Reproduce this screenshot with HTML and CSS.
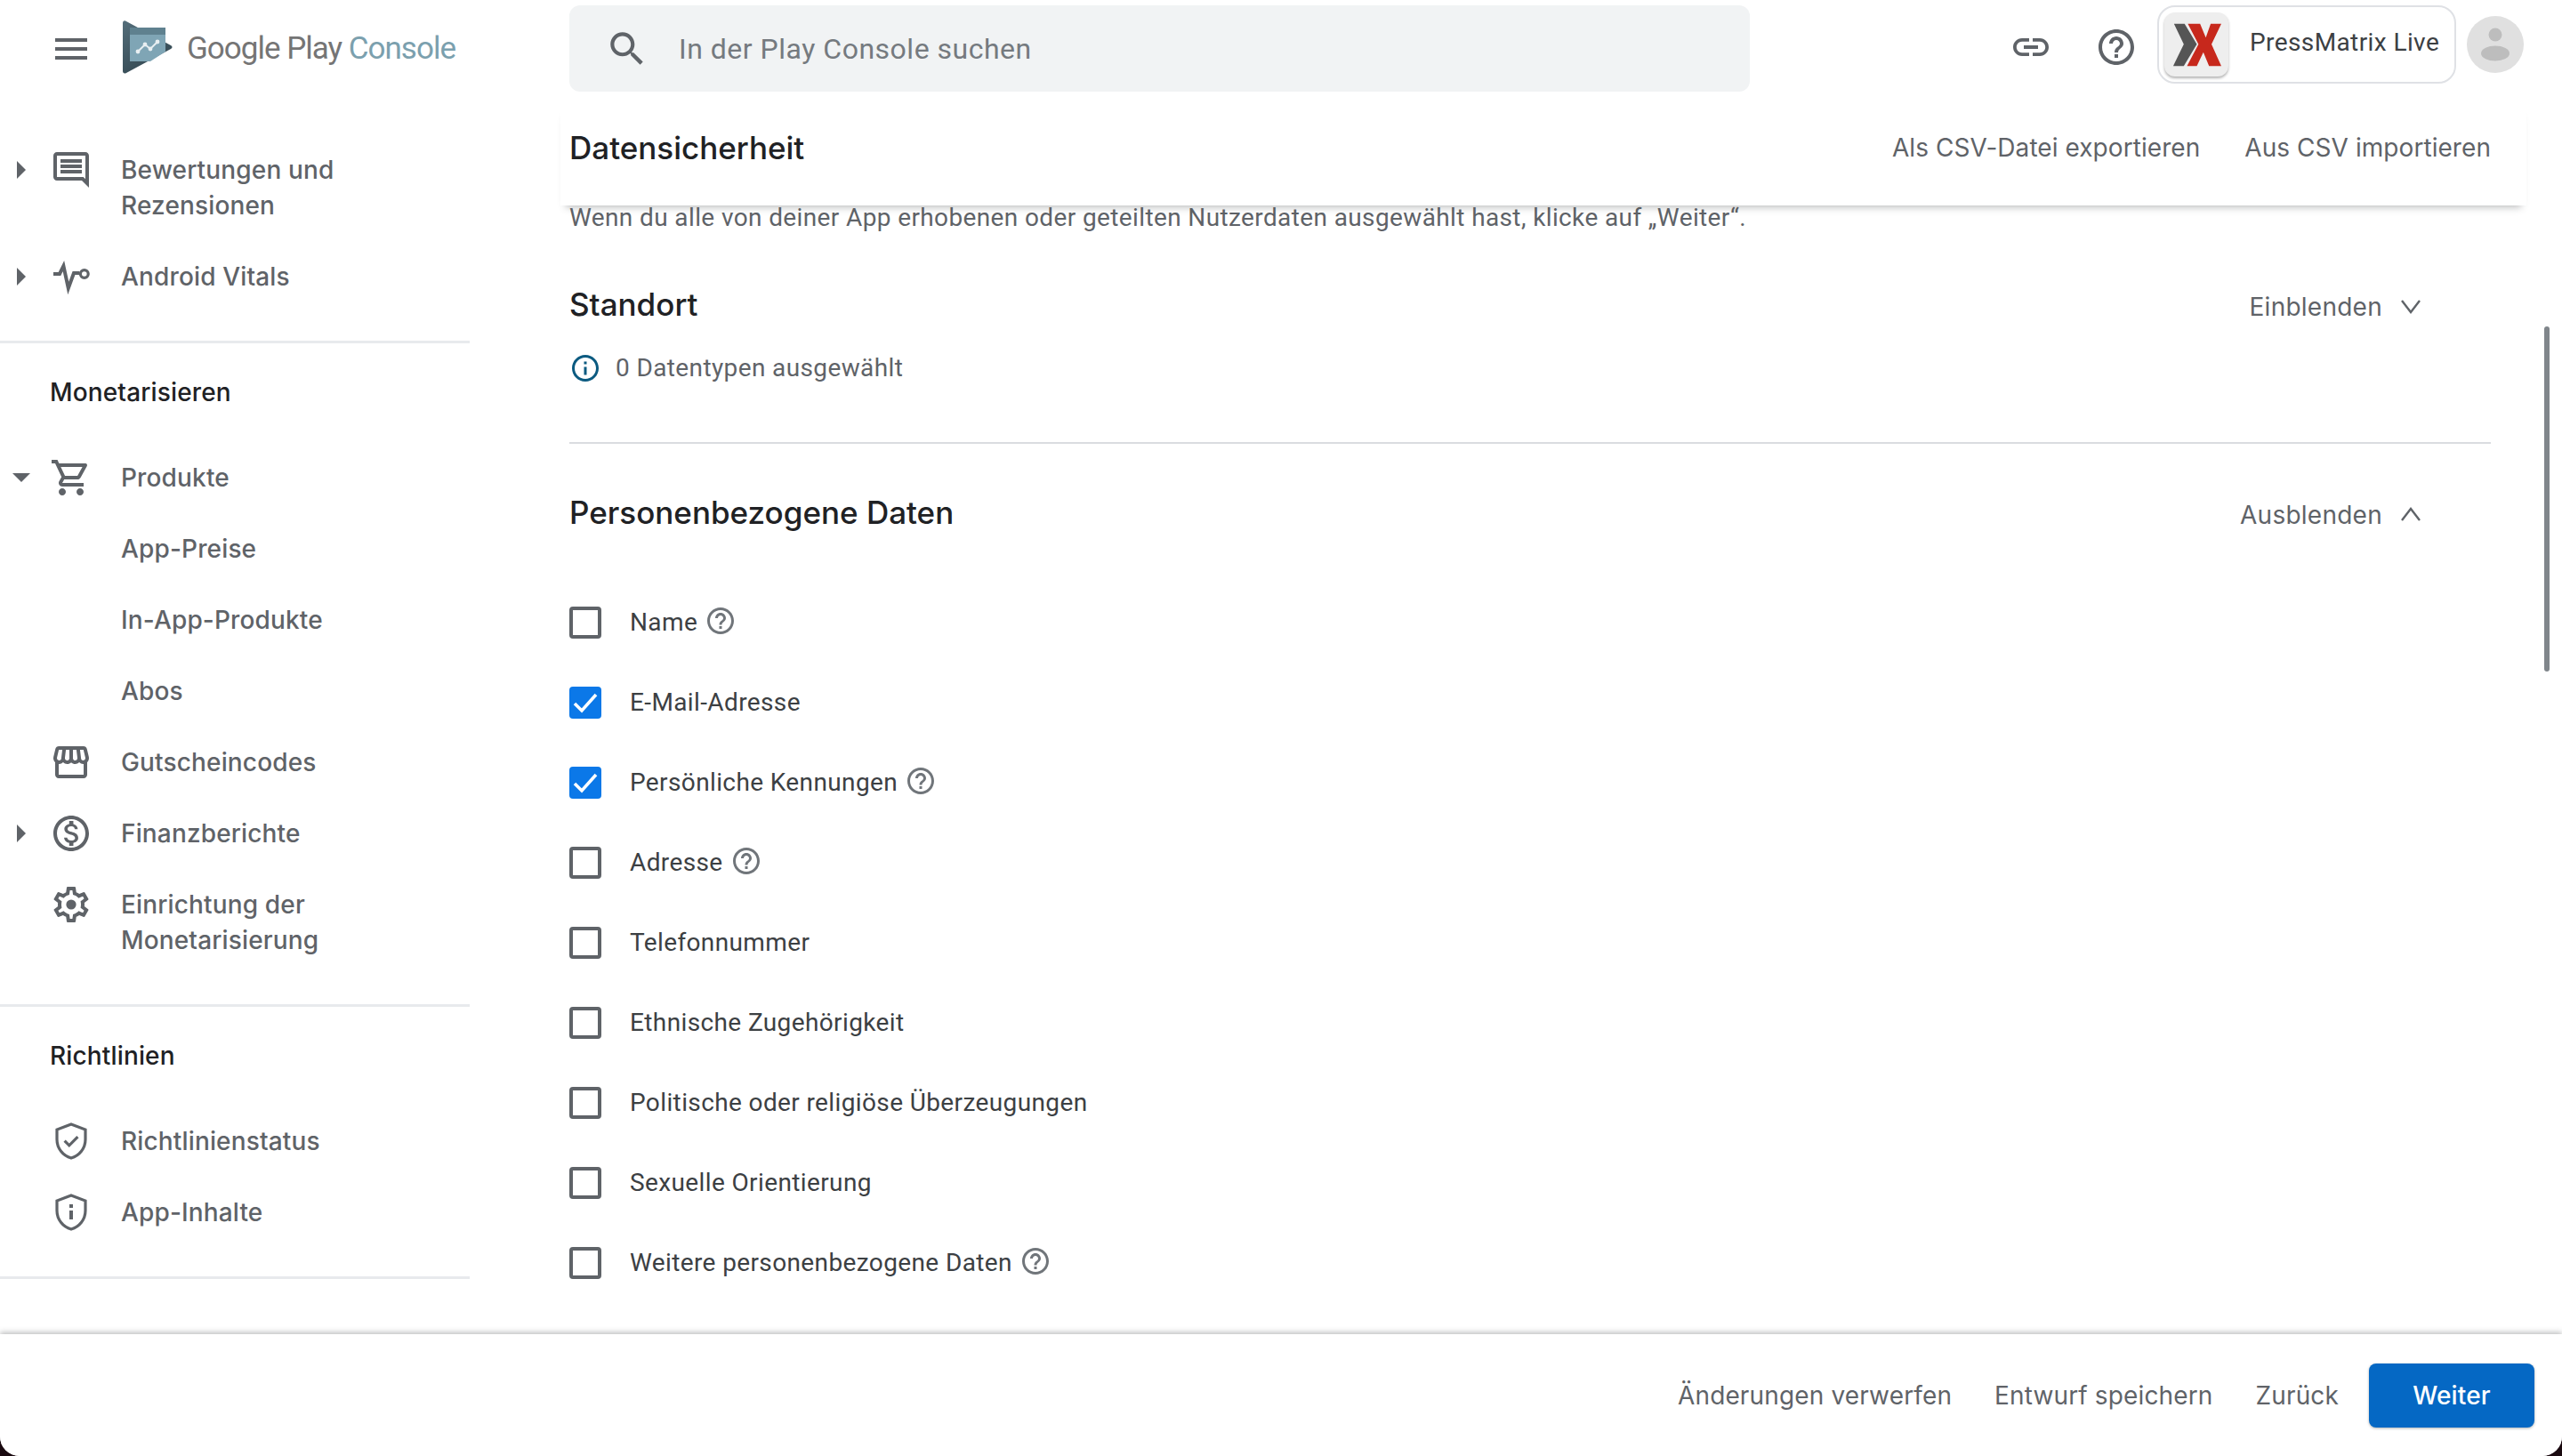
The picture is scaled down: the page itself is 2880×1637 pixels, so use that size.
FILE: index.html
```html
<!DOCTYPE html>
<html lang="de">
<head>
<meta charset="utf-8">
<title>Datensicherheit - Google Play Console</title>
<link rel="stylesheet" href="styles.css">
</head>
<body>
<svg class="defs" width="0" height="0" aria-hidden="true">
  <symbol id="i-help" viewBox="0 0 24 24"><path d="M11 18h2v-2h-2v2zm1-16C6.48 2 2 6.48 2 12s4.48 10 10 10 10-4.48 10-10S17.52 2 12 2zm0 18c-4.41 0-8-3.59-8-8s3.59-8 8-8 8 3.59 8 8-3.59 8-8 8zm0-14c-2.21 0-4 1.79-4 4h2c0-1.1.9-2 2-2s2 .9 2 2c0 2-3 1.75-3 5h2c0-2.25 3-2.5 3-5 0-2.21-1.79-4-4-4z"/></symbol>
  <symbol id="i-check" viewBox="0 0 36 36"><path d="M6 19l8 8L30 9" fill="none" stroke="#fff" stroke-width="3.6"/></symbol>
</svg>
<div class="app">
  <header class="topbar">
    <div class="brand">
      <svg class="icon menu" viewBox="0 0 24 24"><path d="M3 18h18v-2H3v2zm0-5h18v-2H3v2zm0-7v2h18V6H3z"/></svg>
      <svg class="play-logo" viewBox="0 0 56 60">
        <defs><linearGradient id="playgrad" x1="0" y1="0" x2="0.6" y2="1"><stop offset="0" stop-color="#546e7a"/><stop offset="1" stop-color="#324650"/></linearGradient></defs>
        <path d="M0 3C0 .5 2 -.4 4 1L54 28c2 1.100 2 2.900 0 4L4 59c-2 1.100-4 .4-4-2z" fill="url(#playgrad)"/>
        <path d="M8 8h40v27L31 46H8z" fill="#7fa5b5"/>
        <path d="M8 8h40v8H8z" fill="#5f818f"/>
        <path d="M17 35l8-8 6 5 8-8" fill="none" stroke="#e8eff2" stroke-width="2"/>
        <circle cx="17" cy="35" r="2.400" fill="#e8eff2"/><circle cx="25" cy="27" r="2.400" fill="#e8eff2"/><circle cx="31" cy="32" r="2.400" fill="#e8eff2"/><circle cx="39" cy="24" r="2.400" fill="#e8eff2"/>
      </svg>
      <div class="brand-name">Google Play <span class="brand-console">Console</span></div>
    </div>
    <div class="search">
      <svg class="icon search-icon" viewBox="0 0 24 24"><path d="M15.5 14h-.79l-.28-.27C15.41 12.59 16 11.11 16 9.5 16 5.91 13.09 3 9.5 3S3 5.91 3 9.5 5.91 16 9.5 16c1.61 0 3.09-.59 4.23-1.57l.27.28v.79l5 4.99L20.49 19l-4.99-5zm-6 0C7.01 14 5 11.99 5 9.5S7.01 5 9.5 5 14 7.01 14 9.5 11.99 14 9.5 14z"/></svg>
      <span class="search-text">In der Play Console suchen</span>
    </div>
    <div class="top-actions">
      <svg class="icon top-icon" viewBox="0 0 24 24"><path d="M3.9 12c0-1.71 1.39-3.1 3.1-3.1h4V7H7c-2.76 0-5 2.24-5 5s2.24 5 5 5h4v-1.9H7c-1.71 0-3.1-1.39-3.1-3.1zM8 13h8v-2H8v2zm9-6h-4v1.9h4c1.71 0 3.1 1.39 3.1 3.1s-1.39 3.1-3.1 3.1h-4V17h4c2.76 0 5-2.24 5-5s-2.24-5-5-5z"/></svg>
      <svg class="icon top-icon"><use href="#i-help"/></svg>
      <div class="account">
        <div class="account-tile">
          <svg class="account-logo" viewBox="0 0 60 60" preserveAspectRatio="none">
            <path d="M2 1h13l15 28-16 30H1l13-30z" fill="#555"/>
            <path d="M19 1h15l7 19L47 1h13L48 29l12 30H45L38 40l-8 19H18l14-30z" fill="#c7281c"/>
          </svg>
        </div>
        <span class="account-name">PressMatrix Live</span>
      </div>
      <svg class="avatar" viewBox="0 0 64 64">
        <circle cx="32" cy="32" r="32" fill="#e0e0e0"/>
        <circle cx="32" cy="21" r="7.500" fill="#bdbdbd"/>
        <ellipse cx="32" cy="42" rx="16" ry="8.500" fill="#bdbdbd"/>
      </svg>
    </div>
  </header>

  <div class="middle">
    <nav class="sidebar">
      <section class="nav-section nav-first">
        <div class="nav-row">
          <span class="arrow-slot"><span class="arrow-right"></span></span>
          <svg class="icon nav-icon" viewBox="0 0 24 24"><path d="M21.99 4c0-1.1-.89-2-1.99-2H4c-1.1 0-2 .9-2 2v12c0 1.1.9 2 2 2h14l4 4-.01-18zM20 4v13.17L18.83 16H4V4h16zM6 12h12v2H6zm0-3h12v2H6zm0-3h12v2H6z"/></svg>
          <span>Bewertungen und Rezensionen</span>
        </div>
        <div class="nav-row">
          <span class="arrow-slot"><span class="arrow-right"></span></span>
          <svg class="icon nav-icon" viewBox="0 0 24 24"><path d="M2 10.500h3.500L7.700 6l2.700 12.500 3.100-8.500h3.200" fill="none" stroke="#5f6368" stroke-width="2"/><circle cx="19.400" cy="10.500" r="2.200" fill="none" stroke="#5f6368" stroke-width="1.600"/></svg>
          <span>Android Vitals</span>
        </div>
      </section>
      <section class="nav-section">
        <h3 class="nav-title">Monetarisieren</h3>
        <div class="nav-row">
          <span class="arrow-slot"><span class="arrow-down"></span></span>
          <svg class="icon nav-icon" viewBox="0 0 24 24"><path d="M15.55 13c.75 0 1.41-.41 1.75-1.03l3.58-6.49c.37-.66-.11-1.48-.87-1.48H5.21l-.94-2H1v2h2l3.6 7.59-1.35 2.44C4.52 15.37 5.48 17 7 17h12v-2H7l1.1-2h7.45zM6.16 6h12.15l-2.76 5H8.53L6.16 6zM7 18c-1.1 0-1.99.9-1.99 2S5.9 22 7 22s2-.9 2-2-.9-2-2-2zm10 0c-1.1 0-1.99.9-1.99 2s.89 2 1.99 2 2-.9 2-2-.9-2-2-2z"/></svg>
          <span>Produkte</span>
        </div>
        <div class="nav-row"><span class="arrow-slot"></span><span class="nav-icon"></span><span>App-Preise</span></div>
        <div class="nav-row"><span class="arrow-slot"></span><span class="nav-icon"></span><span>In-App-Produkte</span></div>
        <div class="nav-row"><span class="arrow-slot"></span><span class="nav-icon"></span><span>Abos</span></div>
        <div class="nav-row">
          <span class="arrow-slot"></span>
          <svg class="icon nav-icon" viewBox="0 0 24 24"><path d="M21.9 8.89l-1.05-4.37c-.22-.9-1-1.52-1.91-1.52H5.05c-.9 0-1.69.63-1.9 1.52L2.1 8.89c-.24 1.02-.02 2.06.62 2.88.08.11.19.19.28.29V19c0 1.1.9 2 2 2h14c1.1 0 2-.9 2-2v-6.94c.09-.09.2-.18.28-.28.64-.82.87-1.87.62-2.89zm-2.99-3.9l1.05 4.37c.1.42.01.84-.25 1.17-.14.18-.44.47-.94.47-.61 0-1.14-.49-1.21-1.14L16.98 5l1.93-.01zM13 5h1.96l.54 4.52c.05.39-.07.78-.33 1.07-.22.26-.54.41-.95.41-.67 0-1.22-.59-1.22-1.31V5zM8.49 9.52L9.04 5H11v4.69c0 .72-.55 1.31-1.29 1.31-.34 0-.65-.15-.89-.41-.25-.29-.37-.68-.33-1.07zm-4.45-.16L5.05 5h1.97l-.58 4.86c-.08.65-.6 1.14-1.21 1.14-.49 0-.8-.29-.93-.47-.27-.32-.36-.75-.26-1.17zM5 19v-6.03c.08.01.15.03.23.03.87 0 1.66-.36 2.24-.95.6.6 1.4.95 2.31.95.87 0 1.65-.36 2.23-.93.59.57 1.39.93 2.29.93.84 0 1.64-.35 2.24-.95.58.59 1.37.95 2.24.95.08 0 .15-.02.23-.03V19H5z"/></svg>
          <span>Gutscheincodes</span>
        </div>
        <div class="nav-row">
          <span class="arrow-slot"><span class="arrow-right"></span></span>
          <svg class="icon nav-icon" viewBox="0 0 24 24"><path d="M12 2C6.48 2 2 6.48 2 12s4.48 10 10 10 10-4.48 10-10S17.52 2 12 2zm0 18c-4.41 0-8-3.59-8-8s3.59-8 8-8 8 3.59 8 8-3.59 8-8 8zm.31-8.860c-1.770-.45-2.340-.94-2.340-1.670 0-.84.79-1.430 2.100-1.430 1.380 0 1.900.66 1.940 1.640h1.710c-.05-1.340-.87-2.570-2.490-2.970V5H10.900v1.690c-1.510.32-2.720 1.300-2.720 2.810 0 1.790 1.490 2.690 3.660 3.210 1.950.46 2.340 1.150 2.340 1.870 0 .53-.39 1.390-2.100 1.390-1.600 0-2.230-.72-2.320-1.640H8.040c.1 1.700 1.360 2.660 2.860 2.970V19h2.340v-1.670c1.520-.29 2.720-1.160 2.730-2.770-.01-2.200-1.900-2.960-3.660-3.420z"/></svg>
          <span>Finanzberichte</span>
        </div>
        <div class="nav-row">
          <span class="arrow-slot"></span>
          <svg class="icon nav-icon" viewBox="0 0 24 24"><path d="M19.43 12.98c.04-.32.07-.64.07-.98 0-.34-.03-.66-.07-.98l2.11-1.65c.19-.15.24-.42.12-.64l-2-3.46c-.09-.16-.26-.25-.44-.25-.06 0-.12.01-.17.03l-2.49 1c-.52-.4-1.08-.73-1.69-.98l-.38-2.65C14.46 2.18 14.25 2 14 2h-4c-.25 0-.46.18-.49.42l-.38 2.65c-.61.25-1.17.59-1.69.98l-2.49-1c-.06-.02-.12-.03-.18-.03-.17 0-.34.09-.43.25l-2 3.46c-.13.22-.07.49.12.64l2.11 1.65c-.04.32-.07.65-.07.98 0 .33.03.66.07.98l-2.11 1.65c-.19.15-.24.42-.12.64l2 3.46c.09.16.26.25.44.25.06 0 .12-.01.17-.03l2.49-1c.52.4 1.08.73 1.69.98l.38 2.65c.03.24.24.42.49.42h4c.25 0 .46-.18.49-.42l.38-2.65c.61-.25 1.17-.59 1.69-.98l2.49 1c.06.02.12.03.18.03.17 0 .34-.09.43-.25l2-3.46c.12-.22.07-.49-.12-.64l-2.11-1.65zm-1.98-1.710c.04.31.05.52.05.73 0 .21-.02.43-.05.73l-.14 1.130.89.7 1.080.84-.7 1.210-1.270-.51-1.040-.42-.9.68c-.43.32-.84.56-1.250.73l-1.060.43-.16 1.130-.2 1.350h-1.400l-.19-1.350-.16-1.130-1.060-.43c-.43-.18-.83-.41-1.230-.71l-.91-.7-1.060.43-1.270.51-.7-1.210 1.080-.84.89-.7-.14-1.130c-.03-.31-.05-.54-.05-.74s.02-.43.05-.73l.14-1.130-.89-.7-1.080-.84.7-1.210 1.270.51 1.040.42.9-.68c.43-.32.84-.56 1.250-.73l1.060-.43.16-1.130.2-1.350h1.390l.19 1.350.16 1.130 1.060.43c.43.18.83.41 1.230.71l.91.7 1.060-.43 1.270-.51.7 1.210-1.070.85-.89.7.14 1.130z"/><circle cx="12" cy="12" r="2.800"/></svg>
          <span>Einrichtung der Monetarisierung</span>
        </div>
      </section>
      <section class="nav-section">
        <h3 class="nav-title">Richtlinien</h3>
        <div class="nav-row">
          <span class="arrow-slot"></span>
          <svg class="icon nav-icon" viewBox="0 0 24 24"><path d="M12 2.500L20 5.500V11C20 16 16.700 20.200 12 21.500 7.300 20.200 4 16 4 11V5.500z" fill="none" stroke="#5f6368" stroke-width="1.600"/><path d="M8.300 11.800l2.600 2.600 4.800-4.800" fill="none" stroke="#5f6368" stroke-width="1.600"/></svg>
          <span>Richtlinienstatus</span>
        </div>
        <div class="nav-row">
          <span class="arrow-slot"></span>
          <svg class="icon nav-icon" viewBox="0 0 24 24"><path d="M12 2.500L20 5.500V11C20 16 16.700 20.200 12 21.500 7.300 20.200 4 16 4 11V5.500z" fill="none" stroke="#5f6368" stroke-width="1.600"/><path d="M11 7.500h2v2h-2zm0 3.500h2v5h-2z"/></svg>
          <span>App-Inhalte</span>
        </div>
      </section>
    </nav>

    <main class="main">
      <div class="page-head">
        <h1 class="page-title">Datensicherheit</h1>
        <div class="page-actions">
          <span>Als CSV-Datei exportieren</span>
          <span>Aus CSV importieren</span>
        </div>
      </div>
      <div class="content">
        <p class="intro">Wenn du alle von deiner App erhobenen oder geteilten Nutzerdaten ausgewählt hast, klicke auf „Weiter“.</p>

        <div class="group group-collapsed">
          <div class="group-head">
            <h2 class="group-title">Standort</h2>
            <div class="group-toggle">
              <span>Einblenden</span>
              <svg class="chevron" viewBox="0 0 24 24"><path d="M2 5l10 13L22 5"/></svg>
            </div>
          </div>
          <div class="selected-info">
            <svg class="info-icon" viewBox="0 0 24 24"><path d="M11 7h2v2h-2zm0 4h2v6h-2zm1-9C6.480 2 2 6.480 2 12s4.480 10 10 10 10-4.480 10-10S17.520 2 12 2zm0 18c-4.410 0-8-3.590-8-8s3.590-8 8-8 8 3.590 8 8-3.590 8-8 8z"/></svg>
            <span>0 Datentypen ausgewählt</span>
          </div>
        </div>

        <div class="group">
          <div class="group-head">
            <h2 class="group-title">Personenbezogene Daten</h2>
            <div class="group-toggle">
              <span>Ausblenden</span>
              <svg class="chevron" viewBox="0 0 24 24"><path d="M2 18L12 5l10 13"/></svg>
            </div>
          </div>
          <ul class="options">
            <li class="option"><span class="box"></span><span>Name</span><svg class="icon help"><use href="#i-help"/></svg></li>
            <li class="option"><span class="box box-on"><svg class="tick"><use href="#i-check"/></svg></span><span>E-Mail-Adresse</span></li>
            <li class="option"><span class="box box-on"><svg class="tick"><use href="#i-check"/></svg></span><span>Persönliche Kennungen</span><svg class="icon help"><use href="#i-help"/></svg></li>
            <li class="option"><span class="box"></span><span>Adresse</span><svg class="icon help"><use href="#i-help"/></svg></li>
            <li class="option"><span class="box"></span><span>Telefonnummer</span></li>
            <li class="option"><span class="box"></span><span>Ethnische Zugehörigkeit</span></li>
            <li class="option"><span class="box"></span><span>Politische oder religiöse Überzeugungen</span></li>
            <li class="option"><span class="box"></span><span>Sexuelle Orientierung</span></li>
            <li class="option"><span class="box"></span><span>Weitere personenbezogene Daten</span><svg class="icon help"><use href="#i-help"/></svg></li>
          </ul>
        </div>
      </div>
      <div class="scroll-thumb"></div>
    </main>
  </div>

  <footer class="footer">
    <span class="foot-link">Änderungen verwerfen</span>
    <span class="foot-link">Entwurf speichern</span>
    <span class="foot-link">Zurück</span>
    <span class="primary">Weiter</span>
  </footer>
</div>
</body>
</html>
```

FILE: styles.css
```css
* { box-sizing: border-box; }
html { background: #1a0a10; }
html, body { margin: 0; height: 100%; }
body { font-family: Roboto, "Liberation Sans", sans-serif; font-size: 28px; line-height: 40px; letter-spacing: .38px; color: #5f6368; overflow: hidden; }
.defs { position: absolute; }
h1, h2, h3, p, ul { margin: 0; padding: 0; }
ul { list-style: none; }
.icon { fill: #5f6368; flex: none; display: block; }

.app { display: flex; flex-direction: column; height: 1637px; background: #fff; border-radius: 0 0 22px 22px; overflow: hidden; }

.topbar { flex: none; height: 118px; display: flex; align-items: flex-start; background: #fff; }
.brand { width: 640px; flex: none; height: 110px; display: flex; align-items: center; padding-left: 56px; }
.menu { width: 48px; height: 48px; }
.play-logo { width: 56px; height: 60px; margin: 0 0 4px 34px; flex: none; }
.brand-name { margin-left: 16px; font-size: 35px; letter-spacing: -1px; color: #757575; white-space: nowrap; }
.brand-console { color: #7ba0ae; }

.search { width: 1327px; height: 97px; margin-top: 6px; background: #f1f3f4; border-radius: 12px; display: flex; align-items: center; padding-left: 40px; flex: none; }
.search-icon { width: 50px; height: 50px; }
.search-text { margin-left: 33px; font-size: 32px; color: #757a7f; letter-spacing: .5px; }

.top-actions { flex: 1; display: flex; align-items: flex-start; padding-left: 292px; }
.top-icon { width: 48px; height: 48px; margin-top: 29px; margin-right: 48px; }
.top-icon + .top-icon { margin-right: 22px; }
.account { width: 336px; height: 88px; margin-top: 6px; border: 2px solid #dfe1e5; border-radius: 20px; display: flex; align-items: flex-start; padding: 6px 0 0 6px; color: #3c4043; }
.account-tile { width: 72px; height: 72px; background: #eee; border-radius: 12px; box-shadow: 0 2px 3px rgba(0,0,0,.3); display: flex; align-items: center; justify-content: center; flex: none; }
.account-logo { width: 55px; height: 49px; }
.account-name { margin: 14px 0 0 24px; letter-spacing: .4px; white-space: nowrap; }
.avatar { width: 64px; height: 64px; margin: 18px 0 0 12px; flex: none; }

.middle { flex: 1; min-height: 0; display: flex; }

.sidebar { width: 528px; flex: none; font-family: Inter, Roboto, sans-serif; letter-spacing: .15px; }
.nav-section { padding: 25px 0 32px; border-bottom: 3px solid #e8eaed; }
.nav-first { padding-top: 33px; }
.nav-title { font-size: 28px; font-weight: 500; color: #202124; padding: 10px 0 0 56px; height: 86px; }
.nav-row { display: flex; align-items: flex-start; padding: 20px 100px 20px 0; font-weight: 500; }
.arrow-slot { width: 48px; height: 40px; flex: none; display: flex; align-items: center; justify-content: center; }
.arrow-right { width: 0; height: 0; border-left: 10px solid #5f6368; border-top: 10px solid transparent; border-bottom: 10px solid transparent; }
.arrow-down { width: 0; height: 0; border-top: 10px solid #5f6368; border-left: 10px solid transparent; border-right: 10px solid transparent; }
.nav-icon { width: 48px; height: 48px; margin: -4px 32px -4px 8px; flex: none; display: block; }

.main { flex: 1; min-width: 0; position: relative; padding: 0 80px 0 112px; }
.page-head { position: relative; z-index: 1; height: 113px; margin: 0 -40px 0 -10px; padding: 0 40px 18px 10px; background: #fff; box-shadow: 0 8px 8px -6px rgba(60,64,67,.35); display: flex; align-items: center; justify-content: space-between; }
.page-title { font-family: Inter, Roboto, sans-serif; font-size: 35px; font-weight: 500; color: #202124; letter-spacing: 0; }
.page-actions { display: flex; gap: 50px; font-family: Inter, Roboto, sans-serif; letter-spacing: .06px; }
.intro { margin-top: -6px; }

.group-collapsed { padding-top: 48px; height: 234px; border-bottom: 2px solid #dadce0; }
.group-head { display: flex; align-items: center; justify-content: space-between; height: 58px; }
.group-title { font-family: Inter, Roboto, sans-serif; font-size: 35px; font-weight: 500; color: #202124; letter-spacing: 0; }
.group-toggle { display: flex; align-items: center; padding-right: 78px; position: relative; top: 3px; font-family: Inter, Roboto, sans-serif; letter-spacing: .25px; }
.chevron { width: 24px; height: 24px; margin-left: 20px; fill: none; stroke: #5f6368; stroke-width: 2.4; flex: none; }
.selected-info { display: flex; align-items: center; margin-top: 23px; }
.info-icon { width: 36px; height: 36px; fill: #0b5a80; margin-right: 16px; flex: none; }

.group-collapsed + .group { padding-top: 48px; }
.options { margin-top: 50px; }
.option { display: flex; align-items: center; height: 90px; color: #3c4043; }
.box { width: 36px; height: 36px; flex: none; border: 4px solid #5f6368; border-radius: 4px; margin-right: 32px; }
.box-on { background: #0b78e8; border: 0; }
.tick { width: 36px; height: 36px; display: block; }
.help { width: 36px; height: 36px; margin: -4px 0 0 8px; fill: #70757a; }

.scroll-thumb { position: absolute; right: 14px; top: 249px; width: 6px; height: 388px; background: #80868b; border-radius: 3px; }

.footer { flex: none; height: 137px; position: relative; z-index: 2; background: #fff; box-shadow: 0 -2px 6px rgba(60,64,67,.35); display: flex; align-items: center; justify-content: flex-end; padding: 0 31px 0 0; font-family: Inter, Roboto, sans-serif; letter-spacing: .14px; }
.foot-link { margin-right: 48px; }
.foot-link:nth-child(3) { margin-right: 34px; }
.primary { width: 186px; height: 72px; border-radius: 8px; background: #0568c4; color: #fff; display: flex; align-items: center; justify-content: center; font-weight: 500; box-shadow: 0 1px 3px rgba(60,64,67,.4); }
```
